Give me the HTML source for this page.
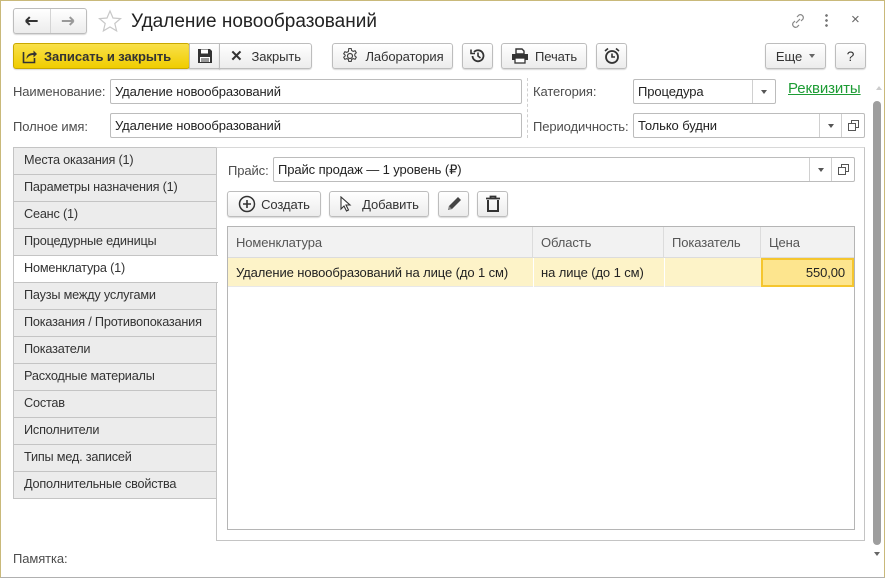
<!DOCTYPE html>
<html><head><meta charset="utf-8"><style>
*{box-sizing:border-box;margin:0;padding:0}
body{width:885px;height:578px;position:relative;overflow:hidden;background:#fff;font-family:"Liberation Sans",Arial,sans-serif;font-size:13px;color:#333;letter-spacing:-0.1px}
.a{position:absolute}
.frame{left:0;top:0;width:885px;height:578px;border:1px solid #c9b97a;border-bottom-color:#b0b0b0}
.btn{position:absolute;height:26px;border:1px solid #bdbdbd;border-radius:3px;background:linear-gradient(#fff,#ececec);box-shadow:0 1px 1px rgba(0,0,0,.15);display:flex;align-items:center;justify-content:center;color:#333;font-size:13px;white-space:nowrap}
.inp{position:absolute;height:25px;border:1px solid #bcbcbc;border-radius:2px;background:#fff;padding:4px 4px;font-size:13px;color:#222;white-space:nowrap}
.lbl{position:absolute;color:#4d4d4d;font-size:13px;white-space:nowrap}
.dd{position:absolute;top:0;height:23px;width:23px;border-left:1px solid #d0d0d0;display:flex;align-items:center;justify-content:center}
.tri{width:0;height:0;border-left:3px solid transparent;border-right:3px solid transparent;border-top:4px solid #555}
.tab{position:absolute;left:13px;width:204px;height:28px;border:1px solid #c4c4c4;background:#ececec;padding:5px 10px;font-size:12.7px;color:#333;white-space:nowrap;overflow:hidden;letter-spacing:-0.2px}
.th{position:absolute;top:0;height:31px;border-right:1px solid #dcdcdc;padding:8px 8px;color:#555}
</style></head><body>
<div class="a frame"></div>

<!-- nav -->
<div class="btn" style="left:13px;top:8px;width:74px;height:26px;justify-content:flex-start">
 <svg width="36" height="14" viewBox="0 0 36 14"><path d="M12 7h12M12 7l4-4M12 7l4 4" fill="none" stroke="#333" stroke-width="2"/></svg>
 <div style="width:1px;height:24px;background:#d4d4d4"></div>
 <svg width="36" height="14" viewBox="0 0 36 14"><path d="M12 7h12M24 7l-4-4M24 7l-4 4" fill="none" stroke="#999" stroke-width="2"/></svg>
</div>
<svg class="a" style="left:98px;top:9px" width="24" height="24" viewBox="0 0 24 24"><path d="M12 2l3 7 7.5.6-5.7 4.9 1.8 7.4L12 18l-6.6 3.9 1.8-7.4L1.5 9.6 9 9z" fill="none" stroke="#c8c8c8" stroke-width="1.2"/></svg>
<div class="a" style="left:131px;top:11px;font-size:19px;color:#222;letter-spacing:0">Удаление новообразований</div>
<svg class="a" style="left:789px;top:12px" width="18" height="18" viewBox="0 0 18 18"><path d="M7 11l4-4M8 5l2-2a3 3 0 014 4l-2 2M10 13l-2 2a3 3 0 01-4-4l2-2" fill="none" stroke="#888" stroke-width="1.2"/></svg>
<div class="a" style="left:825px;top:13px;width:3px;height:14px;background:radial-gradient(circle,#777 1.2px,transparent 1.5px) 0 0/3px 5px"></div>
<div class="a" style="left:851px;top:11px;font-size:15px;color:#666">×</div>

<!-- toolbar -->
<div class="btn" style="left:13px;top:43px;width:177px;background:linear-gradient(#f9e04a,#f0cd00);border-color:#c9a800;font-weight:bold;justify-content:flex-start;padding-left:8px">
 <svg width="16" height="16" viewBox="0 0 16 16" style="margin-right:6px"><path d="M1.5 4v10.5h11V10" fill="none" stroke="#333" stroke-width="1.6"/><path d="M4.5 11c0-4 2.5-6 7-6V2.5L15 6l-3.5 3.5V7c-3 0-5 1-7 4z" fill="#333"/></svg>Записать и закрыть</div>
<div class="btn" style="left:189px;top:43px;width:31px;border-radius:0">
 <svg width="16" height="16" viewBox="0 0 16 16"><path d="M1 1h12l2 2v12H1z" fill="#333"/><rect x="4" y="1.5" width="7" height="4" fill="#fff"/><rect x="3" y="9" width="10" height="5" fill="#fff"/><path d="M4 11h8M4 13h8" stroke="#333"/></svg></div>
<div class="btn" style="left:219px;top:43px;width:93px;border-radius:0 3px 3px 0"><span style="font-weight:bold;font-size:15px;margin-right:9px">✕</span>Закрыть</div>
<div class="btn" style="left:332px;top:43px;width:121px"><svg width="18" height="18" viewBox="0 0 18 18" style="margin-right:6px"><circle cx="9" cy="9" r="2.5" fill="none" stroke="#444" stroke-width="1.2"/><path d="M7.8 1.5h2.4l.4 2 1.6.9 1.9-.7 1.2 2.1-1.5 1.3v1.8l1.5 1.3-1.2 2.1-1.9-.7-1.6.9-.4 2H7.8l-.4-2-1.6-.9-1.9.7-1.2-2.1 1.5-1.3V8.1L2.7 6.8l1.2-2.1 1.9.7 1.6-.9z" fill="none" stroke="#444" stroke-width="1.1"/></svg>Лаборатория</div>
<div class="btn" style="left:462px;top:43px;width:31px"><svg width="18" height="18" viewBox="0 0 18 18"><path d="M3.5 9A5.5 5.5 0 1 0 5 5" fill="none" stroke="#333" stroke-width="1.8"/><path d="M2 2.5v4h4" fill="none" stroke="#333" stroke-width="1.6"/><path d="M9 5.5V9l2.5 2" fill="none" stroke="#333" stroke-width="1.6"/></svg></div>
<div class="btn" style="left:501px;top:43px;width:86px"><svg width="18" height="16" viewBox="0 0 18 16" style="margin-right:6px"><path d="M5 1h6l2 2v3H5z" fill="none" stroke="#333" stroke-width="1.4"/><rect x="1" y="6" width="16" height="6" fill="#333"/><rect x="4" y="10" width="10" height="5" fill="#fff" stroke="#333" stroke-width="1.3"/></svg>Печать</div>
<div class="btn" style="left:596px;top:43px;width:31px"><svg width="18" height="18" viewBox="0 0 18 18"><circle cx="9" cy="10" r="6" fill="none" stroke="#333" stroke-width="1.8"/><path d="M9 6.5V10h3M2 4l3-2.5M16 4l-3-2.5" fill="none" stroke="#333" stroke-width="1.6"/></svg></div>
<div class="btn" style="left:765px;top:43px;width:61px">Еще<span class="tri" style="margin-left:7px;border-top-color:#666"></span></div>
<div class="btn" style="left:835px;top:43px;width:31px;font-size:14px">?</div>

<!-- fields -->
<div class="lbl" style="left:13px;top:84px">Наименование:</div>
<div class="inp" style="left:110px;top:79px;width:412px">Удаление новообразований</div>
<div class="lbl" style="left:13px;top:119px">Полное имя:</div>
<div class="inp" style="left:110px;top:113px;width:412px">Удаление новообразований</div>
<div class="a" style="left:527px;top:78px;height:60px;border-left:1px dashed #cfcfcf"></div>
<div class="lbl" style="left:533px;top:84px">Категория:</div>
<div class="inp" style="left:633px;top:79px;width:143px">Процедура<div class="dd" style="right:0"><span class="tri"></span></div></div>
<div class="a" style="left:788px;top:80px;font-size:15px;color:#1e9c35;text-decoration:underline">Реквизиты</div>
<div class="lbl" style="left:533px;top:119px">Периодичность:</div>
<div class="inp" style="left:633px;top:113px;width:232px">Только будни<div class="dd" style="right:22px"><span class="tri"></span></div><div class="dd" style="right:0;width:23px"><svg width="11" height="11" viewBox="0 0 11 11"><path d="M3.5 3.5V.5h7v7h-3M.5 3.5h7v7h-7z" fill="none" stroke="#555"/></svg></div></div>

<!-- scrollbar -->
<div class="a" style="left:876px;top:86px;width:0;height:0;border-left:3px solid transparent;border-right:3px solid transparent;border-bottom:4px solid #ccc"></div>
<div class="a" style="left:873px;top:101px;width:8px;height:444px;background:#9e9e9e;border-radius:4px"></div>
<div class="a" style="left:874px;top:552px;width:0;height:0;border-left:3px solid transparent;border-right:3px solid transparent;border-top:4px solid #666"></div>

<!-- tabs -->
<div class="tab" style="top:147px">Места оказания (1)</div>
<div class="tab" style="top:174px">Параметры назначения (1)</div>
<div class="tab" style="top:201px">Сеанс (1)</div>
<div class="tab" style="top:228px">Процедурные единицы</div>
<div class="tab" style="top:282px">Паузы между услугами</div>
<div class="tab" style="top:309px">Показания / Противопоказания</div>
<div class="tab" style="top:336px">Показатели</div>
<div class="tab" style="top:363px">Расходные материалы</div>
<div class="tab" style="top:390px">Состав</div>
<div class="tab" style="top:417px">Исполнители</div>
<div class="tab" style="top:444px">Типы мед. записей</div>
<div class="tab" style="top:471px">Дополнительные свойства</div>

<!-- panel -->
<div class="a" style="left:216px;top:147px;width:649px;height:394px;border:1px solid #c4c4c4;border-top:1px solid #d8d8d8"></div>
<div class="tab" style="top:255px;background:#fff;border-right:none;width:205px;z-index:2">Номенклатура (1)</div>

<div class="lbl" style="left:228px;top:163px">Прайс:</div>
<div class="inp" style="left:273px;top:157px;width:582px">Прайс продаж — 1 уровень (₽)<div class="dd" style="right:22px"><span class="tri"></span></div><div class="dd" style="right:0"><svg width="11" height="11" viewBox="0 0 11 11"><path d="M3.5 3.5V.5h7v7h-3M.5 3.5h7v7h-7z" fill="none" stroke="#555"/></svg></div></div>

<div class="btn" style="left:227px;top:191px;width:94px"><svg width="18" height="18" viewBox="0 0 18 18" style="margin-right:5px"><circle cx="9" cy="9" r="7.5" fill="none" stroke="#333" stroke-width="1.5"/><path d="M9 5v8M5 9h8" stroke="#333" stroke-width="1.6"/></svg>Создать</div>
<div class="btn" style="left:329px;top:191px;width:100px"><svg width="14" height="16" viewBox="0 0 14 16" style="margin-right:9px"><path d="M2 1v12l3-3 2.5 5 2-1-2.5-5H11z" fill="#fff" stroke="#333" stroke-width="1.1"/></svg>Добавить</div>
<div class="btn" style="left:438px;top:191px;width:31px"><svg width="18" height="18" viewBox="0 0 18 18"><path d="M3 15l1-4 9-9 3 3-9 9z" fill="#444"/><path d="M3 15l1-4 3 3z" fill="#888"/></svg></div>
<div class="btn" style="left:477px;top:191px;width:31px"><svg width="16" height="18" viewBox="0 0 16 18"><path d="M1 3.5h14M5.5 3.5V1.5h5v2" fill="none" stroke="#333" stroke-width="1.8"/><path d="M3 5v11h10V5" fill="none" stroke="#333" stroke-width="2"/></svg></div>

<!-- table -->
<div class="a" style="left:227px;top:226px;width:628px;height:304px;border:1px solid #b5b5b5;background:#fff">
 <div class="a" style="left:0;top:0;width:626px;height:31px;background:#f2f2f2;border-bottom:1px solid #dcdcdc"></div>
 <div class="th" style="left:0;width:305px">Номенклатура</div>
 <div class="th" style="left:305px;width:131px">Область</div>
 <div class="th" style="left:436px;width:97px">Показатель</div>
 <div class="th" style="left:533px;width:93px;border-right:none">Цена</div>
 <div class="a" style="left:0;top:31px;width:626px;height:29px;background:#fdf3c8;border-bottom:1px solid #e8e8e8"></div>
 <div class="a" style="left:8px;top:38px;color:#222">Удаление новообразований на лице (до 1 см)</div>
 <div class="a" style="left:305px;top:31px;width:1px;height:29px;background:#fff"></div>
 <div class="a" style="left:313px;top:38px;color:#222">на лице (до 1 см)</div>
 <div class="a" style="left:436px;top:31px;width:1px;height:29px;background:#fff"></div>
 <div class="a" style="left:533px;top:31px;width:93px;height:29px;background:#fde58e;border:2px solid #f5c62e;text-align:right;padding:5px 7px;color:#222">550,00</div>
</div>

<div class="lbl" style="left:13px;top:551px">Памятка:</div>
</body></html>
